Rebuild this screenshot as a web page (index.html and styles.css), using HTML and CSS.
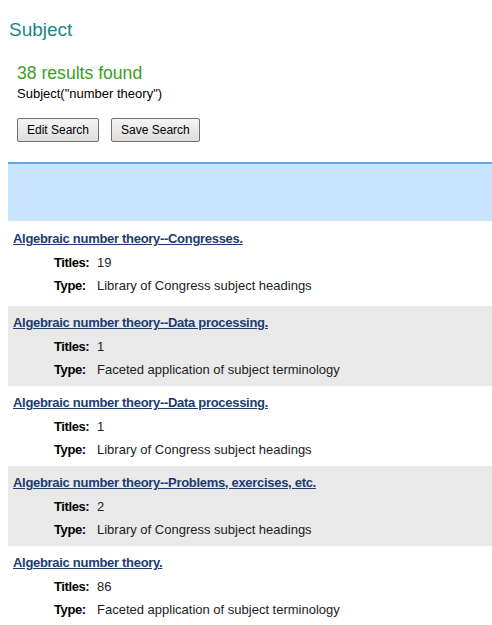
FILE: index.html
```html
<!DOCTYPE html>
<html>
<head>
<meta charset="utf-8">
<title>Subject</title>
<link rel="stylesheet" href="styles.css">
</head>
<body>
<h1 class="page-title">Subject</h1>
<div class="summary">
  <div class="count">38 results found</div>
  <div class="query">Subject("number theory")</div>
  <div class="actions">
    <button class="btn" type="button">Edit Search</button>
    <button class="btn" type="button">Save Search</button>
  </div>
</div>
<div class="toolbar"></div>
<ul class="results">
  <li class="result">
    <a class="result-link" href="#">Algebraic number theory--Congresses.</a>
    <dl class="meta"><dt>Titles:</dt><dd>19</dd><dt>Type:</dt><dd>Library of Congress subject headings</dd></dl>
  </li>
  <li class="result alt">
    <a class="result-link" href="#">Algebraic number theory--Data processing.</a>
    <dl class="meta"><dt>Titles:</dt><dd>1</dd><dt>Type:</dt><dd>Faceted application of subject terminology</dd></dl>
  </li>
  <li class="result">
    <a class="result-link" href="#">Algebraic number theory--Data processing.</a>
    <dl class="meta"><dt>Titles:</dt><dd>1</dd><dt>Type:</dt><dd>Library of Congress subject headings</dd></dl>
  </li>
  <li class="result alt">
    <a class="result-link" href="#">Algebraic number theory--Problems, exercises, etc.</a>
    <dl class="meta"><dt>Titles:</dt><dd>2</dd><dt>Type:</dt><dd>Library of Congress subject headings</dd></dl>
  </li>
  <li class="result">
    <a class="result-link" href="#">Algebraic number theory.</a>
    <dl class="meta"><dt>Titles:</dt><dd>86</dd><dt>Type:</dt><dd>Faceted application of subject terminology</dd></dl>
  </li>
</ul>
</body>
</html>
```
FILE: styles.css
```css
html, body {
  background: #ffffff;
}
body {
  margin: 0 0 0 8px;
  font-family: "Liberation Sans", Arial, sans-serif;
  font-size: 13px;
  color: #111;
  overflow: hidden;
}
.page-title {
  margin: 0;
  padding: 18px 0 0 1px;
  font-size: 19px;
  font-weight: normal;
  line-height: 23px;
  color: #17868b;
}
.summary {
  padding: 22px 0 0 9px;
}
.count {
  font-size: 17.6px;
  line-height: 20px;
  color: #3aa01c;
}
.query {
  margin-top: 3px;
  font-size: 13px;
  line-height: 15px;
  color: #000;
}
.actions {
  display: flex;
  gap: 12px;
  margin-top: 17px;
}
.btn {
  height: 24px;
  padding: 0 9px;
  font-family: "Liberation Sans", Arial, sans-serif;
  font-size: 12px;
  color: #000;
  border: 1px solid #707070;
  border-radius: 2px;
  background: linear-gradient(#f4f4f4, #dedede);
}
.toolbar {
  margin-top: 20px;
  height: 57px;
  border-top: 2px solid #5aabf3;
  background: #c9e4fe;
}
.results {
  list-style: none;
  margin: 0;
  padding: 0;
}
.result {
  height: 80px;
  box-sizing: border-box;
  padding: 7px 0 0 5px;
}
.result:first-child {
  height: 85px;
  padding-top: 8px;
}
.result.alt {
  background: #e9e9e9;
}
.result-link {
  display: block;
  line-height: 20px;
  font-weight: bold;
  color: #1c3d6e;
  text-decoration: underline;
  letter-spacing: -0.3px;
}
.meta {
  display: grid;
  grid-template-columns: 43px 1fr;
  margin: 2px 0 0 41px;
  line-height: 23px;
}
.meta dt {
  font-weight: bold;
  color: #000;
  letter-spacing: -0.4px;
}
.meta dd {
  margin: 0;
  color: #222;
}
```
